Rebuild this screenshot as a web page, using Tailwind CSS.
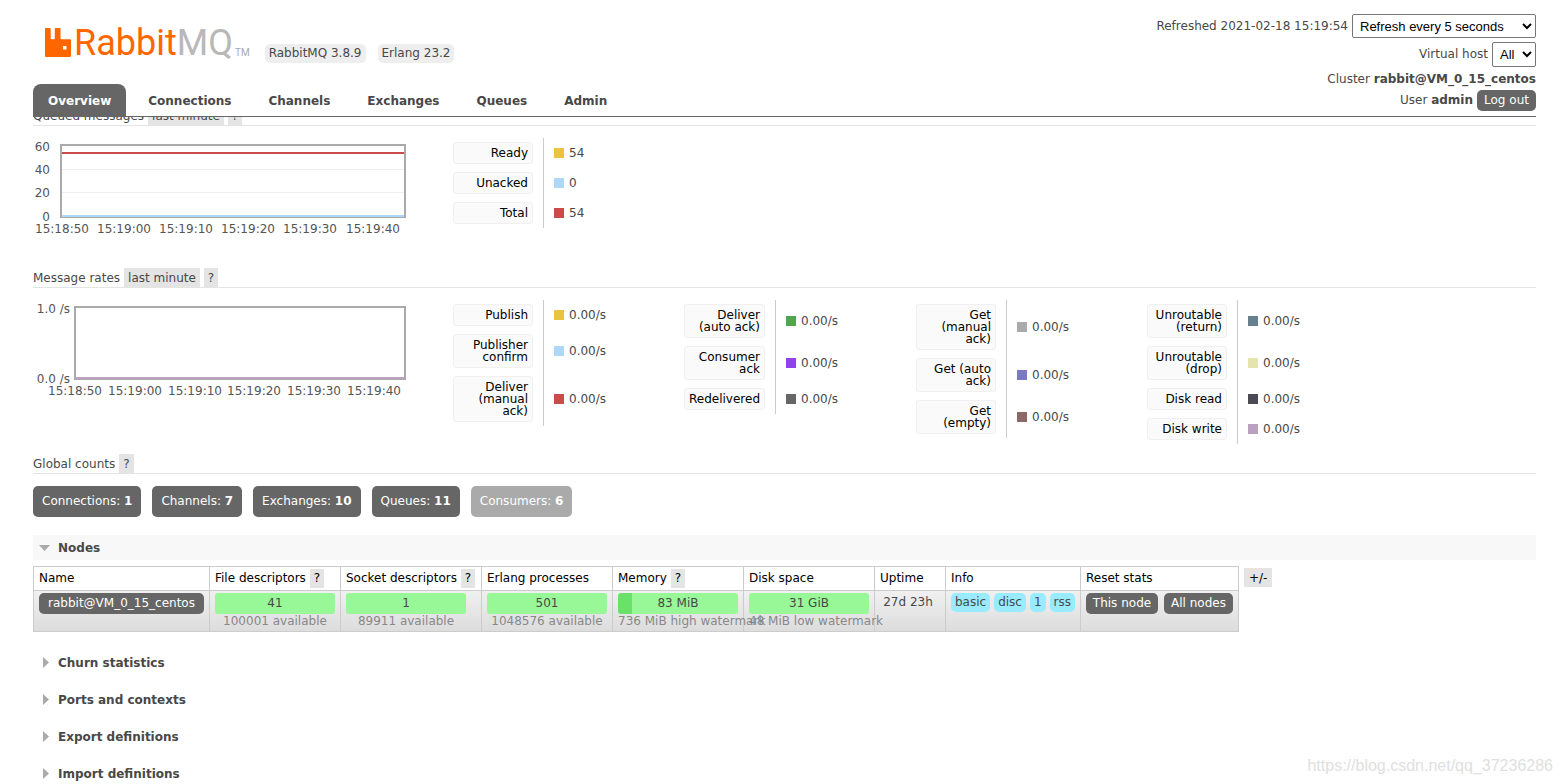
<!DOCTYPE html>
<html lang="en">
<head>
<meta charset="utf-8">
<title>RabbitMQ Management</title>
<script src="https://cdn.jsdelivr.net/npm/@tailwindcss/browser@4"></script>
</head>
<body class="relative h-screen overflow-hidden bg-white pl-[33px] pr-[26px] font-['DejaVu_Sans',sans-serif] text-[12px] leading-[15px] text-[#484848]">

<header class="relative z-10 flex items-end justify-between border-b border-[#666] bg-white pt-[14px]">
  <div>
    <div class="mb-[24px] flex items-end pl-[12px]">
      <a href="#" class="flex items-start" aria-label="RabbitMQ">
        <svg class="mt-[1px] h-[29px] w-[26px]" viewBox="0 0 26 29" fill="#f60"><path fill-rule="evenodd" d="M1 0H4.700Q5.700 0 5.700 1V10.300Q5.700 11.300 6.700 11.300H8.800Q9.800 11.300 9.800 10.300V1Q9.800 0 10.800 0H14.500Q15.500 0 15.500 1V10.300Q15.500 11.300 16.500 11.300H25Q26 11.300 26 12.300V28Q26 29 25 29H1Q0 29 0 28V1Q0 0 1 0ZM18 18V21.500H21.500V18Z"/></svg>
        <span class="ml-[3px] font-[Roboto,sans-serif] text-[36px] leading-[33px] text-[#f60]">Rabbit<span class="text-[#b8b8b8]">MQ</span></span>
        <span class="mt-[20px] ml-[2px] font-[Roboto,sans-serif] text-[10px] leading-[12px] text-[#aaa]">TM</span>
      </a>
      <span class="ml-[15px] -mb-[3px] rounded-[5px] bg-[#eee] px-[4px] py-[2px]">RabbitMQ 3.8.9</span>
      <span class="ml-[12px] -mb-[3px] rounded-[5px] bg-[#eee] px-[4px] py-[2px]">Erlang 23.2</span>
    </div>
    <nav class="flex gap-[7px] font-bold">
      <a href="#" class="rounded-t-[8px] bg-[#666] px-[15px] pt-[10px] pb-[7px] text-white">Overview</a>
      <a href="#" class="px-[15px] pt-[10px] pb-[7px]">Connections</a>
      <a href="#" class="px-[15px] pt-[10px] pb-[7px]">Channels</a>
      <a href="#" class="px-[15px] pt-[10px] pb-[7px]">Exchanges</a>
      <a href="#" class="px-[15px] pt-[10px] pb-[7px]">Queues</a>
      <a href="#" class="px-[15px] pt-[10px] pb-[7px]">Admin</a>
    </nav>
  </div>
  <div class="flex flex-col items-end pb-[5px]">
    <div class="mb-[4px] flex items-center gap-[4px]"><label for="refresh">Refreshed 2021-02-18 15:19:54</label>
      <select id="refresh" class="h-[24px] w-[184px] rounded-[2px] border border-[#767676] bg-white pl-[3px] font-['Liberation_Sans',sans-serif] text-[13px] text-black"><option>Refresh every 5 seconds</option></select></div>
    <div class="mb-[5px] flex items-center gap-[4px]"><label for="vhost">Virtual host</label>
      <select id="vhost" class="h-[25px] w-[44px] rounded-[2px] border border-[#767676] bg-white pl-[3px] font-['Liberation_Sans',sans-serif] text-[13px] text-black"><option>All</option></select></div>
    <div class="mb-[3px]">Cluster <b>rabbit@VM_0_15_centos</b></div>
    <div class="flex items-center gap-[4px]"><span>User <b>admin</b></span><button class="h-[21px] min-w-[59px] rounded-[5px] bg-[#666] px-[7px] text-white">Log out</button></div>
  </div>
</header>

<main class="-mt-[11px]">
  <section class="mb-[30px]">
    <h2 class="mb-[12px] flex items-end gap-[4px] border-b border-[#e4e4e4]"><span class="pt-[3px] pb-[1px]">Queued messages</span><button class="bg-[#e4e4e4] px-[4px] pt-[3px] pb-[1px]">last minute</button><button class="bg-[#e4e4e4] px-[4px] pt-[3px] pb-[1px]">?</button></h2>
    <div class="flex items-start">
      <svg class="h-[100px] w-[420px]" viewBox="0 0 420 100" font-size="12" fill="#545454">
        <rect x="28" y="7" width="344" height="72" fill="none" stroke="#aaa" stroke-width="2"/>
        <path d="M29 31.500h342M29 54.500h342" stroke="#eee"/>
        <path d="M29 15h342" stroke="#cb4b4b" stroke-width="2"/>
        <path d="M29 78h342" stroke="#afd8f8" stroke-width="2"/>
        <g text-anchor="end"><text x="17" y="13">60</text><text x="17" y="36">40</text><text x="17" y="59">20</text><text x="17" y="83">0</text></g>
        <g text-anchor="middle"><text x="29" y="95">15:18:50</text><text x="91" y="95">15:19:00</text><text x="153" y="95">15:19:10</text><text x="215" y="95">15:19:20</text><text x="277" y="95">15:19:30</text><text x="340" y="95">15:19:40</text></g>
      </svg>
      <table>
        <tr><th scope="row" class="py-[4px] pr-[10px] font-normal"><div class="w-[80px] rounded-[3px] border border-[#f0f0f0] bg-[#fafafa] p-[4px] text-right leading-[12px] text-black">Ready</div></th><td class="border-l border-[#ccc] pl-[10px]"><span class="flex items-center gap-[5px]"><i class="size-[10px] bg-[#edc240]"></i>54</span></td></tr>
        <tr><th scope="row" class="py-[4px] pr-[10px] font-normal"><div class="w-[80px] rounded-[3px] border border-[#f0f0f0] bg-[#fafafa] p-[4px] text-right leading-[12px] text-black">Unacked</div></th><td class="border-l border-[#ccc] pl-[10px]"><span class="flex items-center gap-[5px]"><i class="size-[10px] bg-[#afd8f8]"></i>0</span></td></tr>
        <tr><th scope="row" class="py-[4px] pr-[10px] font-normal"><div class="w-[80px] rounded-[3px] border border-[#f0f0f0] bg-[#fafafa] p-[4px] text-right leading-[12px] text-black">Total</div></th><td class="border-l border-[#ccc] pl-[10px]"><span class="flex items-center gap-[5px]"><i class="size-[10px] bg-[#cb4b4b]"></i>54</span></td></tr>
      </table>
    </div>
  </section>

  <section class="mb-[10px]">
    <h2 class="mb-[12px] flex items-end gap-[4px] border-b border-[#e4e4e4]"><span class="pt-[3px] pb-[1px]">Message rates</span><button class="bg-[#e4e4e4] px-[4px] pt-[3px] pb-[1px]">last minute</button><button class="bg-[#e4e4e4] px-[4px] pt-[3px] pb-[1px]">?</button></h2>
    <div class="flex items-start">
      <svg class="h-[100px] w-[420px]" viewBox="0 0 420 100" font-size="12" fill="#545454">
        <rect x="42" y="7" width="330" height="72" fill="none" stroke="#aaa" stroke-width="2"/>
        <path d="M42 78h329" stroke="#bda0c4" stroke-width="2"/>
        <g text-anchor="end"><text x="37" y="13">1.0 /s</text><text x="37" y="83">0.0 /s</text></g>
        <g text-anchor="middle"><text x="42" y="95">15:18:50</text><text x="102" y="95">15:19:00</text><text x="162" y="95">15:19:10</text><text x="221" y="95">15:19:20</text><text x="281" y="95">15:19:30</text><text x="341" y="95">15:19:40</text></g>
      </svg>
      <div class="w-[231px]"><table>
        <tr><th scope="row" class="py-[4px] pr-[10px] font-normal"><div class="w-[80px] rounded-[3px] border border-[#f0f0f0] bg-[#fafafa] p-[4px] text-right leading-[12px] text-black">Publish</div></th><td class="border-l border-[#ccc] pl-[10px]"><span class="flex items-center gap-[5px]"><i class="size-[10px] bg-[#edc240]"></i>0.00/s</span></td></tr>
        <tr><th scope="row" class="py-[4px] pr-[10px] font-normal"><div class="w-[80px] rounded-[3px] border border-[#f0f0f0] bg-[#fafafa] p-[4px] text-right leading-[12px] text-black">Publisher<br>confirm</div></th><td class="border-l border-[#ccc] pl-[10px]"><span class="flex items-center gap-[5px]"><i class="size-[10px] bg-[#afd8f8]"></i>0.00/s</span></td></tr>
        <tr><th scope="row" class="py-[4px] pr-[10px] font-normal"><div class="w-[80px] rounded-[3px] border border-[#f0f0f0] bg-[#fafafa] p-[4px] text-right leading-[12px] text-black">Deliver<br>(manual<br>ack)</div></th><td class="border-l border-[#ccc] pl-[10px]"><span class="flex items-center gap-[5px]"><i class="size-[10px] bg-[#cb4b4b]"></i>0.00/s</span></td></tr>
      </table></div>
      <div class="w-[232px]"><table>
        <tr><th scope="row" class="py-[4px] pr-[10px] font-normal"><div class="w-[81px] rounded-[3px] border border-[#f0f0f0] bg-[#fafafa] p-[4px] text-right leading-[12px] text-black">Deliver<br>(auto ack)</div></th><td class="border-l border-[#ccc] pl-[10px]"><span class="flex items-center gap-[5px]"><i class="size-[10px] bg-[#4da74d]"></i>0.00/s</span></td></tr>
        <tr><th scope="row" class="py-[4px] pr-[10px] font-normal"><div class="w-[81px] rounded-[3px] border border-[#f0f0f0] bg-[#fafafa] p-[4px] text-right leading-[12px] text-black">Consumer<br>ack</div></th><td class="border-l border-[#ccc] pl-[10px]"><span class="flex items-center gap-[5px]"><i class="size-[10px] bg-[#9440ed]"></i>0.00/s</span></td></tr>
        <tr><th scope="row" class="py-[4px] pr-[10px] font-normal"><div class="w-[81px] rounded-[3px] border border-[#f0f0f0] bg-[#fafafa] p-[4px] text-right leading-[12px] text-black">Redelivered</div></th><td class="border-l border-[#ccc] pl-[10px]"><span class="flex items-center gap-[5px]"><i class="size-[10px] bg-[#666]"></i>0.00/s</span></td></tr>
      </table></div>
      <div class="w-[231px]"><table>
        <tr><th scope="row" class="py-[4px] pr-[10px] font-normal"><div class="w-[80px] rounded-[3px] border border-[#f0f0f0] bg-[#fafafa] p-[4px] text-right leading-[12px] text-black">Get<br>(manual<br>ack)</div></th><td class="border-l border-[#ccc] pl-[10px]"><span class="flex items-center gap-[5px]"><i class="size-[10px] bg-[#aaa]"></i>0.00/s</span></td></tr>
        <tr><th scope="row" class="py-[4px] pr-[10px] font-normal"><div class="w-[80px] rounded-[3px] border border-[#f0f0f0] bg-[#fafafa] p-[4px] text-right leading-[12px] text-black">Get (auto<br>ack)</div></th><td class="border-l border-[#ccc] pl-[10px]"><span class="flex items-center gap-[5px]"><i class="size-[10px] bg-[#7c79c3]"></i>0.00/s</span></td></tr>
        <tr><th scope="row" class="py-[4px] pr-[10px] font-normal"><div class="w-[80px] rounded-[3px] border border-[#f0f0f0] bg-[#fafafa] p-[4px] text-right leading-[12px] text-black">Get<br>(empty)</div></th><td class="border-l border-[#ccc] pl-[10px]"><span class="flex items-center gap-[5px]"><i class="size-[10px] bg-[#8e6767]"></i>0.00/s</span></td></tr>
      </table></div>
      <div class="w-[231px]"><table>
        <tr><th scope="row" class="py-[4px] pr-[10px] font-normal"><div class="w-[80px] rounded-[3px] border border-[#f0f0f0] bg-[#fafafa] p-[4px] text-right leading-[12px] text-black">Unroutable<br>(return)</div></th><td class="border-l border-[#ccc] pl-[10px]"><span class="flex items-center gap-[5px]"><i class="size-[10px] bg-[#67808d]"></i>0.00/s</span></td></tr>
        <tr><th scope="row" class="py-[4px] pr-[10px] font-normal"><div class="w-[80px] rounded-[3px] border border-[#f0f0f0] bg-[#fafafa] p-[4px] text-right leading-[12px] text-black">Unroutable<br>(drop)</div></th><td class="border-l border-[#ccc] pl-[10px]"><span class="flex items-center gap-[5px]"><i class="size-[10px] bg-[#e5e4ae]"></i>0.00/s</span></td></tr>
        <tr><th scope="row" class="py-[4px] pr-[10px] font-normal"><div class="w-[80px] rounded-[3px] border border-[#f0f0f0] bg-[#fafafa] p-[4px] text-right leading-[12px] text-black">Disk read</div></th><td class="border-l border-[#ccc] pl-[10px]"><span class="flex items-center gap-[5px]"><i class="size-[10px] bg-[#4b4a55]"></i>0.00/s</span></td></tr>
        <tr><th scope="row" class="py-[4px] pr-[10px] font-normal"><div class="w-[80px] rounded-[3px] border border-[#f0f0f0] bg-[#fafafa] p-[4px] text-right leading-[12px] text-black">Disk write</div></th><td class="border-l border-[#ccc] pl-[10px]"><span class="flex items-center gap-[5px]"><i class="size-[10px] bg-[#bba0c1]"></i>0.00/s</span></td></tr>
      </table></div>
    </div>
  </section>

  <section>
    <h2 class="mb-[12px] flex items-end gap-[4px] border-b border-[#e4e4e4]"><span class="pt-[3px] pb-[1px]">Global counts</span><button class="bg-[#e4e4e4] px-[4px] pt-[3px] pb-[1px]">?</button></h2>
    <div class="flex gap-[11px] text-white">
      <a href="#" class="rounded-[5px] bg-[#666] px-[9px] py-[8px]">Connections: <b>1</b></a>
      <a href="#" class="rounded-[5px] bg-[#666] px-[9px] py-[8px]">Channels: <b>7</b></a>
      <a href="#" class="rounded-[5px] bg-[#666] px-[9px] py-[8px]">Exchanges: <b>10</b></a>
      <a href="#" class="rounded-[5px] bg-[#666] px-[9px] py-[8px]">Queues: <b>11</b></a>
      <span class="rounded-[5px] bg-[#aaa] px-[9px] py-[8px]">Consumers: <b>6</b></span>
    </div>
  </section>

  <section class="mt-[18px]">
    <h2 class="flex h-[25px] items-center bg-[#f8f8f8] pt-[1px] pl-[6px] font-bold"><svg class="mr-[8px] h-[6px] w-[11px]" viewBox="0 0 11 6" fill="#aaa"><path d="M0 0h11L5.500 6z"/></svg>Nodes</h2>
    <div class="mt-[6px] flex items-start">
      <table class="w-[1206px] table-fixed border-collapse border border-[#ccc]">
        <colgroup><col class="w-[176px]"><col class="w-[131px]"><col class="w-[141px]"><col class="w-[131px]"><col class="w-[131px]"><col class="w-[131px]"><col class="w-[71px]"><col class="w-[135px]"><col class="w-[158px]"></colgroup>
        <thead class="text-left whitespace-nowrap text-black">
          <tr class="h-[24px]">
            <th class="border border-[#ccc] px-[5px] font-normal">Name</th>
            <th class="border border-[#ccc] px-[5px] font-normal">File descriptors <button class="bg-[#e4e4e4] px-[4px] py-[2px]">?</button></th>
            <th class="border border-[#ccc] px-[5px] font-normal">Socket descriptors <button class="bg-[#e4e4e4] px-[4px] py-[2px]">?</button></th>
            <th class="border border-[#ccc] px-[5px] font-normal">Erlang processes</th>
            <th class="border border-[#ccc] px-[5px] font-normal">Memory <button class="bg-[#e4e4e4] px-[4px] py-[2px]">?</button></th>
            <th class="border border-[#ccc] px-[5px] font-normal">Disk space</th>
            <th class="border border-[#ccc] px-[5px] font-normal">Uptime</th>
            <th class="border border-[#ccc] px-[5px] font-normal">Info</th>
            <th class="border border-[#ccc] px-[5px] font-normal">Reset stats</th>
          </tr>
        </thead>
        <tbody>
          <tr class="h-[41px] bg-linear-to-b from-[#f0f0f0] to-[#dcdcdc] align-top whitespace-nowrap">
            <td class="border border-[#ccc] px-[5px] pt-[2px]"><a href="#" class="block rounded-[5px] bg-[#666] py-[3px] text-center text-white">rabbit@VM_0_15_centos</a></td>
            <td class="border border-[#ccc] px-[5px] pt-[2px]"><div class="w-[120px] text-center"><div class="rounded-[3px] bg-[#98f898] py-[3px]">41</div><div class="text-[#888]">100001 available</div></div></td>
            <td class="border border-[#ccc] px-[5px] pt-[2px]"><div class="w-[120px] text-center"><div class="rounded-[3px] bg-[#98f898] py-[3px]">1</div><div class="text-[#888]">89911 available</div></div></td>
            <td class="border border-[#ccc] px-[5px] pt-[2px]"><div class="w-[120px] text-center"><div class="rounded-[3px] bg-[#98f898] py-[3px]">501</div><div class="text-[#888]">1048576 available</div></div></td>
            <td class="border border-[#ccc] px-[5px] pt-[2px]"><div class="w-[120px]"><div class="rounded-[3px] bg-linear-to-r from-[#6ae26a] from-[14px] to-[#98f898] to-[14px] py-[3px] text-center">83 MiB</div><div class="text-[#888]">736 MiB high watermark</div></div></td>
            <td class="border border-[#ccc] px-[5px] pt-[2px]"><div class="w-[120px]"><div class="rounded-[3px] bg-[#98f898] py-[3px] text-center">31 GiB</div><div class="text-[#888]">48 MiB low watermark</div></div></td>
            <td class="border border-[#ccc] pt-[4px] pr-[4px] text-center">27d 23h</td>
            <td class="border border-[#ccc] px-[5px] pt-[2px]"><div class="flex gap-[4px]"><span class="rounded-[5px] bg-[#99ebff] px-[4px] py-[2px]">basic</span><span class="rounded-[5px] bg-[#99ebff] px-[4px] py-[2px]">disc</span><span class="rounded-[5px] bg-[#99ebff] px-[4px] py-[2px]">1</span><span class="rounded-[5px] bg-[#99ebff] px-[4px] py-[2px]">rss</span></div></td>
            <td class="border border-[#ccc] px-[5px] pt-[2px]"><div class="flex gap-[6px] text-white"><button class="min-w-[72px] rounded-[5px] bg-[#666] px-[6px] py-[3px]">This node</button><button class="min-w-[69px] rounded-[5px] bg-[#666] px-[6px] py-[3px]">All nodes</button></div></td>
          </tr>
        </tbody>
      </table>
      <button class="mt-[2px] ml-[5px] bg-[#e4e4e4] px-[5px] pt-[3px] pb-[1px] text-black">+/-</button>
    </div>
  </section>

  <div class="mt-[18px] flex flex-col gap-[12px] font-bold">
    <h2 class="flex h-[25px] items-center pt-[1px] pl-[10px]"><svg class="mr-[9px] mb-[2px] h-[11px] w-[6px]" viewBox="0 0 6 11" fill="#aaa"><path d="M0 0v11L6 5.500z"/></svg>Churn statistics</h2>
    <h2 class="flex h-[25px] items-center pt-[1px] pl-[10px]"><svg class="mr-[9px] mb-[2px] h-[11px] w-[6px]" viewBox="0 0 6 11" fill="#aaa"><path d="M0 0v11L6 5.500z"/></svg>Ports and contexts</h2>
    <h2 class="flex h-[25px] items-center pt-[1px] pl-[10px]"><svg class="mr-[9px] mb-[2px] h-[11px] w-[6px]" viewBox="0 0 6 11" fill="#aaa"><path d="M0 0v11L6 5.500z"/></svg>Export definitions</h2>
    <h2 class="flex h-[25px] items-center pt-[1px] pl-[10px]"><svg class="mr-[9px] mb-[2px] h-[11px] w-[6px]" viewBox="0 0 6 11" fill="#aaa"><path d="M0 0v11L6 5.500z"/></svg>Import definitions</h2>
  </div>
</main>

<div class="absolute right-[9px] bottom-[8px] font-['Liberation_Sans',sans-serif] text-[16px] leading-[20px] text-[#e0e0e0]">https://blog.csdn.net/qq_37236286</div>
</body>
</html>
